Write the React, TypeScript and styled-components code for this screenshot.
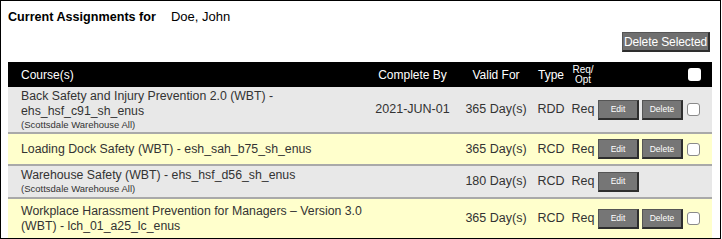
import React from "react";
import styled, { createGlobalStyle } from "styled-components";

const GlobalStyle = createGlobalStyle`
  html, body {
    margin: 0;
    padding: 0;
    background: #fff;
  }
  body {
    font-family: "Liberation Sans", Arial, sans-serif;
    color: #333;
  }
`;

const Frame = styled.div`
  box-sizing: border-box;
  width: 721px;
  height: 239px;
  border: 1px solid #000;
  padding: 8px 8px 0 7px;
  overflow: hidden;
`;

const Title = styled.h3`
  margin: 0;
  height: 16px;
  line-height: 16px;
  font-size: 12.6px;
  font-weight: bold;
  color: #000;
  display: flex;
  align-items: baseline;
`;

const Name = styled.span`
  margin-left: 15px;
  font-weight: normal;
  font-size: 13px;
  color: #000;
`;

const Toolbar = styled.div`
  display: flex;
  justify-content: flex-end;
  margin-top: 7px;
  padding-right: 2px;
`;

const GrayButton = styled.button`
  box-sizing: border-box;
  background: #6f6f6f;
  color: #fff;
  font-family: "Liberation Sans", Arial, sans-serif;
  border: 1px solid #555;
  border-right: 2px solid #2e2e2e;
  border-bottom: 2px solid #2e2e2e;
  cursor: pointer;
  padding: 0;
  white-space: nowrap;
`;

const BulkButton = styled(GrayButton)`
  height: 20px;
  width: 88px;
  font-size: 12px;
  line-height: 16px;
  letter-spacing: -0.1px;
`;

const RowButton = styled(GrayButton)`
  height: 20px;
  width: 41px;
  font-size: 8.5px;
  background: #767676;
`;

const Table = styled.table`
  margin-top: 10px;
  width: 704px;
  border-collapse: collapse;
  table-layout: fixed;
`;

const HeadRow = styled.tr`
  background: #000;
  color: #fff;
  height: 25px;
`;

const Th = styled.th<{ $align?: string; $small?: boolean }>`
  font-weight: normal;
  font-size: ${(p) => (p.$small ? "10px" : "12px")};
  line-height: ${(p) => (p.$small ? "10px" : "14px")};
  text-align: ${(p) => p.$align || "center"};
  padding: 0;
  vertical-align: middle;
`;

const Row = styled.tr<{ $tint: "gray" | "yellow"; $h: number }>`
  background: ${(p) => (p.$tint === "gray" ? "#e8e8e8" : "#ffffcc")};
  height: ${(p) => p.$h}px;
  border-top: 2px solid #a9a9a9;

  &:first-of-type {
    border-top: none;
  }
`;

const Td = styled.td<{ $align?: string }>`
  font-size: 12.5px;
  line-height: 15px;
  text-align: ${(p) => p.$align || "center"};
  vertical-align: middle;
  padding: 0;
  color: #333;
  white-space: nowrap;
`;

const CourseCell = styled.td`
  padding: 0 0 0 13px;
  vertical-align: middle;
  font-size: 12.3px;
  line-height: 15px;
  color: #333;
  white-space: nowrap;
`;

const Site = styled.div`
  font-size: 9.5px;
  line-height: 12px;
  color: #333;
`;

const Actions = styled.div`
  display: flex;
  gap: 3px;
  padding-left: 2px;
`;

const Box = styled.span<{ $head?: boolean }>`
  display: block;
  box-sizing: border-box;
  width: 13px;
  height: 13px;
  margin-left: ${(p) => (p.$head ? "4px" : "3px")};
  border-radius: 3px;
  background: #fff;
  border: ${(p) => (p.$head ? "none" : "1px solid #8a8a8a")};
`;

type Assignment = {
  title: string[];
  site?: string;
  completeBy?: string;
  validFor: string;
  type: string;
  req: string;
  canDelete: boolean;
  tint: "gray" | "yellow";
  height: number;
};

const rows: Assignment[] = [
  {
    title: ["Back Safety and Injury Prevention 2.0 (WBT) -", "ehs_hsf_c91_sh_enus"],
    site: "(Scottsdale Warehouse All)",
    completeBy: "2021-JUN-01",
    validFor: "365 Day(s)",
    type: "RDD",
    req: "Req",
    canDelete: true,
    tint: "gray",
    height: 46,
  },
  {
    title: ["Loading Dock Safety (WBT) - esh_sah_b75_sh_enus"],
    validFor: "365 Day(s)",
    type: "RCD",
    req: "Req",
    canDelete: true,
    tint: "yellow",
    height: 32,
  },
  {
    title: ["Warehouse Safety (WBT) - ehs_hsf_d56_sh_enus"],
    site: "(Scottsdale Warehouse All)",
    validFor: "180 Day(s)",
    type: "RCD",
    req: "Req",
    canDelete: false,
    tint: "gray",
    height: 33,
  },
  {
    title: ["Workplace Harassment Prevention for Managers \u2013 Version 3.0", "(WBT) - lch_01_a25_lc_enus"],
    validFor: "365 Day(s)",
    type: "RCD",
    req: "Req",
    canDelete: true,
    tint: "yellow",
    height: 40,
  },
];

export default function App() {
  return (
    <>
      <GlobalStyle />
      <Frame>
        <Title>
          Current Assignments for <Name>Doe, John</Name>
        </Title>
        <Toolbar>
          <BulkButton>Delete Selected</BulkButton>
        </Toolbar>
        <Table>
          <colgroup>
            <col style={{ width: 357 }} />
            <col style={{ width: 95 }} />
            <col style={{ width: 72 }} />
            <col style={{ width: 38 }} />
            <col style={{ width: 26 }} />
            <col style={{ width: 88 }} />
            <col style={{ width: 28 }} />
          </colgroup>
          <thead>
            <HeadRow>
              <Th $align="left" style={{ paddingLeft: 13 }}>Course(s)</Th>
              <Th>Complete By</Th>
              <Th>Valid For</Th>
              <Th>Type</Th>
              <Th $small>
                Req/
                <br />
                Opt
              </Th>
              <Th />
              <Th $align="left">
                <Box $head />
              </Th>
            </HeadRow>
          </thead>
          <tbody>
            {rows.map((r, i) => (
              <Row key={i} $tint={r.tint} $h={r.height}>
                <CourseCell>
                  {r.title.map((t, j) => (
                    <div key={j}>{t}</div>
                  ))}
                  {r.site && <Site>{r.site}</Site>}
                </CourseCell>
                <Td>{r.completeBy}</Td>
                <Td>{r.validFor}</Td>
                <Td>{r.type}</Td>
                <Td>{r.req}</Td>
                <Td $align="left">
                  <Actions>
                    <RowButton>Edit</RowButton>
                    {r.canDelete && <RowButton>Delete</RowButton>}
                  </Actions>
                </Td>
                <Td $align="left">{r.canDelete && <Box />}</Td>
              </Row>
            ))}
          </tbody>
        </Table>
      </Frame>
    </>
  );
}
